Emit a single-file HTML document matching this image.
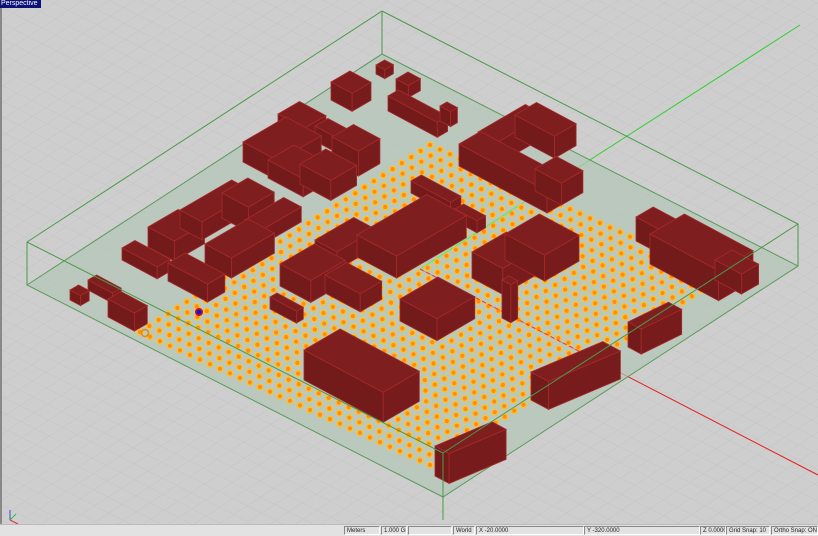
<!DOCTYPE html>
<html><head><meta charset="utf-8"><style>
html,body{margin:0;padding:0;background:#cdcdcd;overflow:hidden}
#wrap{position:relative;width:818px;height:536px;overflow:hidden}
svg{position:absolute;left:0;top:0}
#lbl{position:absolute;left:0;top:0;width:40px;height:8px;background:#0c1275;color:#fff;font:7px "Liberation Sans",sans-serif;line-height:8px;padding-left:1px}
#bar{position:absolute;left:0;top:524px;width:818px;height:12px;background:#e2e2e2;border-top:1px solid #bbb;font:6px "Liberation Sans",sans-serif;color:#222}
.f{position:absolute;top:1px;height:9px;border:1px solid #999;border-color:#888 #fff #fff #888;line-height:9px;padding-left:2px;box-sizing:border-box;white-space:nowrap;overflow:hidden}
</style></head><body><div id="wrap">
<svg id="s" width="818" height="536" xmlns="http://www.w3.org/2000/svg">
<defs>
<pattern id="g" width="16" height="16" patternUnits="userSpaceOnUse" patternTransform="matrix(0.838,-0.545,0.891,0.454,27,285)">
<path d="M0 0H16M0 0V16" stroke="#c3c3c3" stroke-width="1" fill="none"/>
</pattern>
</defs>
<rect width="818" height="536" fill="#cecece"/>
<rect width="818" height="536" fill="url(#g)"/>
<rect x="0" y="0" width="2" height="524" fill="#888"/>
<line x1="420" y1="269" x2="818" y2="475" stroke="#e02020" stroke-width="1"/>
<line x1="420" y1="269" x2="800" y2="25" stroke="#30d030" stroke-width="1"/>
<polygon points="27,285 382,54 798,266 443,497" fill="#b4c6b6" fill-opacity="0.7" stroke="#5a9a5a" stroke-width="1"/>
<line x1="27" y1="242" x2="382" y2="11" stroke="#4a9a4a"/>
<line x1="382" y1="11" x2="798" y2="224" stroke="#4a9a4a"/>
<line x1="27" y1="242" x2="27" y2="285" stroke="#4a9a4a"/>
<line x1="382" y1="11" x2="382" y2="54" stroke="#4a9a4a"/>
<line x1="798" y1="224" x2="798" y2="266" stroke="#4a9a4a"/>
<g id="dots"></g>
<line x1="420" y1="269" x2="520" y2="205" stroke="#40ff40" stroke-width="1" stroke-dasharray="4,3"/>
<line x1="420" y1="269" x2="600" y2="362" stroke="#ff3030" stroke-width="1" stroke-dasharray="4,3"/>
<g id="b"></g>
<line x1="27" y1="242" x2="443" y2="453" stroke="#4a9a4a"/>
<line x1="443" y1="453" x2="798" y2="224" stroke="#4a9a4a"/>
<line x1="443" y1="453" x2="443" y2="520" stroke="#4a9a4a"/>
<circle cx="199" cy="312" r="4" fill="#cc1010"/><circle cx="199" cy="312" r="2.3" fill="#1010e0"/>
<circle cx="145" cy="333" r="3.5" fill="none" stroke="#e08a10" stroke-width="1.5"/>
<line x1="10" y1="520" x2="10" y2="510" stroke="#3050e0"/><line x1="10" y1="520" x2="16" y2="514" stroke="#30c030"/><line x1="10" y1="520" x2="18" y2="524" stroke="#e03030"/>
</svg>
<div id="lbl">Perspective</div>
<div id="bar">
<div class="f" style="left:344px;width:36px">Meters</div>
<div class="f" style="left:381px;width:26px">1.000 Grid</div>
<div class="f" style="left:408px;width:44px"></div>
<div class="f" style="left:453px;width:22px">World</div>
<div class="f" style="left:476px;width:108px">X -20.0000</div>
<div class="f" style="left:584px;width:116px">Y -320.0000</div>
<div class="f" style="left:700px;width:26px">Z 0.0000</div>
<div class="f" style="left:726px;width:44px">Grid Snap: 10</div>
<div class="f" style="left:771px;width:47px">Ortho Snap: ON</div>
</div>
</div>
<script>
var dg=document.getElementById("dots"),s="";
var A=[140,332],B=[430,145],D=[430,465],n=31,m=29;
for(var i=0;i<=n;i++)for(var j=0;j<=m;j++){
var x=A[0]+(B[0]-A[0])*i/n+(D[0]-A[0])*j/m,y=A[1]+(B[1]-A[1])*i/n+(D[1]-A[1])*j/m;
s+='<circle cx="'+x.toFixed(1)+'" cy="'+y.toFixed(1)+'" r="3.5" fill="#ffc21e"/><circle cx="'+x.toFixed(1)+'" cy="'+y.toFixed(1)+'" r="2.1" fill="#ff8a20"/>';}
dg.innerHTML=s;
var bg=document.getElementById("b"),t="";
var DU=[0.86,-0.5],DV=[0.88,0.47];
function P(p){return p.map(function(q){return q[0].toFixed(1)+","+q[1].toFixed(1)}).join(" ")}
function box(x,y,a,b,h,du){du=du||DU;var dv=DV;
var T0=[x,y],Tu=[x+a*du[0],y+a*du[1]],Tv=[x+b*dv[0],y+b*dv[1]],Tuv=[Tu[0]+b*dv[0],Tu[1]+b*dv[1]];
function d(p){return [p[0],p[1]+h]}
t+='<polygon points="'+P([T0,Tv,d(Tv),d(T0)])+'" fill="#731a1b" stroke="#a52a2a" stroke-width="0.8"/>';
t+='<polygon points="'+P([Tv,Tuv,d(Tuv),d(Tv)])+'" fill="#781b1c" stroke="#a52a2a" stroke-width="0.8"/>';
t+='<polygon points="'+P([T0,Tu,Tuv,Tv])+'" fill="#7e1e1f" stroke="#a52a2a" stroke-width="0.8"/>';}
var L=[
[376,65,10,10,9],[331,82,22,24,18],
[396,79,14,14,12],[388,96,12,56,15],[440,106,8,12,15],
[278,114,25,30,18],[315,126,15,45,15],[243,142,50,40,20],[332,137,25,30,25],[268,160,30,40,18],[300,164,30,35,20],
[148,227,35,30,20],[180,210,60,25,18],[222,193,30,30,25],[245,220,45,20,15],[122,248,15,40,12],[205,244,50,30,20],[168,263,20,45,18],
[70,290,10,12,10],[88,280,10,28,10],[108,299,15,30,18],
[478,132,55,22,22],[459,144,25,100,22],[515,115,25,45,22],[535,169,25,30,22],
[411,181,12,45,12],[455,209,10,25,12],
[315,240,45,25,18],[357,235,81,45,22],[280,264,40,35,22],[325,275,25,40,18],
[472,252,40,35,26],[505,234,40,45,26],[502,280,8,10,38],
[400,299,44,42,22],[270,297,8,30,12],
[304,350,42,90,30],
[636,217,20,40,24],[650,234,40,78,30],[715,260,20,30,20],
];
L.forEach(function(q){box.apply(null,q)});
box(628,322,45,15,25,[0.9,-0.44]);
box(531,372,78,20,28,[0.92,-0.39]);
box(435,446,62,16,30,[0.92,-0.39]);
bg.innerHTML=t;
</script>
</body></html>
